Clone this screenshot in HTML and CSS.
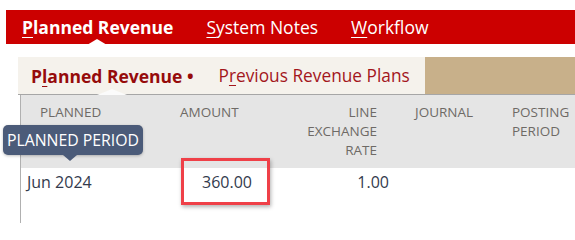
FILE: index.html
```html
<!DOCTYPE html>
<html>
<head>
<meta charset="utf-8">
<link rel="stylesheet" href="styles.css">
</head>
<body>
<div class="page">
  <nav class="mainbar">
    <span class="maintab active"><u>P</u>lanned Revenue</span>
    <span class="maintab sys"><u>S</u>ystem Notes</span>
    <span class="maintab wf"><u>W</u>orkflow</span>
  </nav>
  <div class="subbar">
    <div class="subtabs">
      <span class="subtab active">P<u>l</u>anned Revenue •</span>
      <span class="subtab prev">P<u>r</u>evious Revenue Plans</span>
    </div>
    <div class="subfill"></div>
  </div>
  <div class="table">
    <div class="thead">
      <div class="th c1">PLANNED</div>
      <div class="th c2">AMOUNT</div>
      <div class="th c3 right">LINE<br>EXCHANGE<br>RATE</div>
      <div class="th c4">JOURNAL</div>
      <div class="th c5">POSTING<br>PERIOD</div>
    </div>
    <div class="trow">
      <div class="td d1">Jun 2024</div>
      <div class="td d2 right">360.00</div>
      <div class="td d3 right">1.00</div>
      <div class="td"></div>
      <div class="td"></div>
    </div>
  </div>
  <div class="tooltip">PLANNED PERIOD</div>
  <div class="highlight"></div>
</div>
</body>
</html>
```

FILE: styles.css
```css
html, body {
  margin: 0;
  padding: 0;
  background: #ffffff;
  overflow: hidden;
}
body {
  font-family: "Open Sans", "Liberation Sans", sans-serif;
  width: 575px;
  height: 223px;
}
.page {
  position: relative;
  padding-top: 10px;
  height: 213px;
}
.mainbar {
  margin-left: 6px;
  height: 34px;
  background: #cc0000;
  display: flex;
  align-items: center;
  color: #ffffff;
  font-size: 17.5px;
}
.maintab {
  position: relative;
  white-space: nowrap;
}
.maintab u {
  text-decoration-thickness: 1px;
  text-underline-offset: 3px;
}
.maintab.active {
  font-weight: 700;
  margin-left: 16px;
}
.maintab.active::after {
  content: "";
  position: absolute;
  left: 65px;
  top: 24px;
  border-left: 10px solid transparent;
  border-right: 10px solid transparent;
  border-bottom: 6px solid #ffffff;
}
.maintab.sys {
  margin-left: 33px;
}
.maintab.wf {
  margin-left: 33px;
}
.subbar {
  margin-top: 13px;
  margin-left: 18px;
  height: 37px;
  display: flex;
  border-bottom: 1px solid #a6a6a6;
}
.subtabs {
  width: 407px;
  background: #f5f2ec;
  display: flex;
  align-items: center;
  font-size: 17.5px;
}
.subfill {
  flex: 1;
  background: #c8b08a;
}
.subtab {
  white-space: nowrap;
  position: relative;
}
.subtab u {
  text-decoration-thickness: 1px;
  text-underline-offset: 3px;
}
.subtab.active {
  margin-left: 13px;
  font-weight: 700;
  color: #960b0b;
}
.subtab.active::after {
  content: "";
  position: absolute;
  left: 66px;
  top: 25px;
  border-left: 15px solid transparent;
  border-right: 15px solid transparent;
  border-bottom: 6px solid #fbfbfb;
}
.subtab.prev {
  margin-left: 25px;
  font-size: 17.3px;
  color: #a3161c;
}
.table {
  margin-left: 20px;
  border-left: 1px solid #b0b0b0;
  height: 130px;
}
.thead, .trow {
  display: grid;
  grid-template-columns: 149px 92px 135px 103px 1fr;
}
.thead {
  background: #e5e5e5;
  height: 73px;
  box-sizing: border-box;
  padding-top: 8px;
  font-size: 13.5px;
  line-height: 19px;
  color: #6e6a66;
}
.th {
  white-space: nowrap;
}
.right {
  text-align: right;
}
.c1 { padding-left: 19px; }
.c2 { padding-left: 10px; }
.c3 { padding-right: 20px; }
.c4 { padding-left: 18px; }
.c5 { padding-left: 12px; }
.trow {
  padding-top: 3px;
  font-size: 16px;
  line-height: 22px;
  color: #333a4d;
}
.d1 { padding-left: 6px; }
.d2 { padding-right: 10px; }
.d3 { padding-right: 8px; }
.tooltip {
  position: absolute;
  left: 3px;
  top: 125px;
  width: 140px;
  height: 30px;
  box-sizing: border-box;
  background: #4b5b79;
  color: #ffffff;
  border-radius: 5px;
  font-size: 15.8px;
  line-height: 30px;
  text-align: center;
  white-space: nowrap;
  box-shadow: 0 1px 3px rgba(0, 0, 0, 0.25);
}
.tooltip::after {
  content: "";
  position: absolute;
  left: 60px;
  top: 30px;
  border-left: 7px solid transparent;
  border-right: 7px solid transparent;
  border-top: 6px solid #4b5b79;
}
.highlight {
  position: absolute;
  left: 181px;
  top: 158px;
  width: 89px;
  height: 47px;
  box-sizing: border-box;
  border: 3px solid #ef4048;
  box-shadow: 1px 2px 4px rgba(0, 0, 0, 0.3);
}
```
